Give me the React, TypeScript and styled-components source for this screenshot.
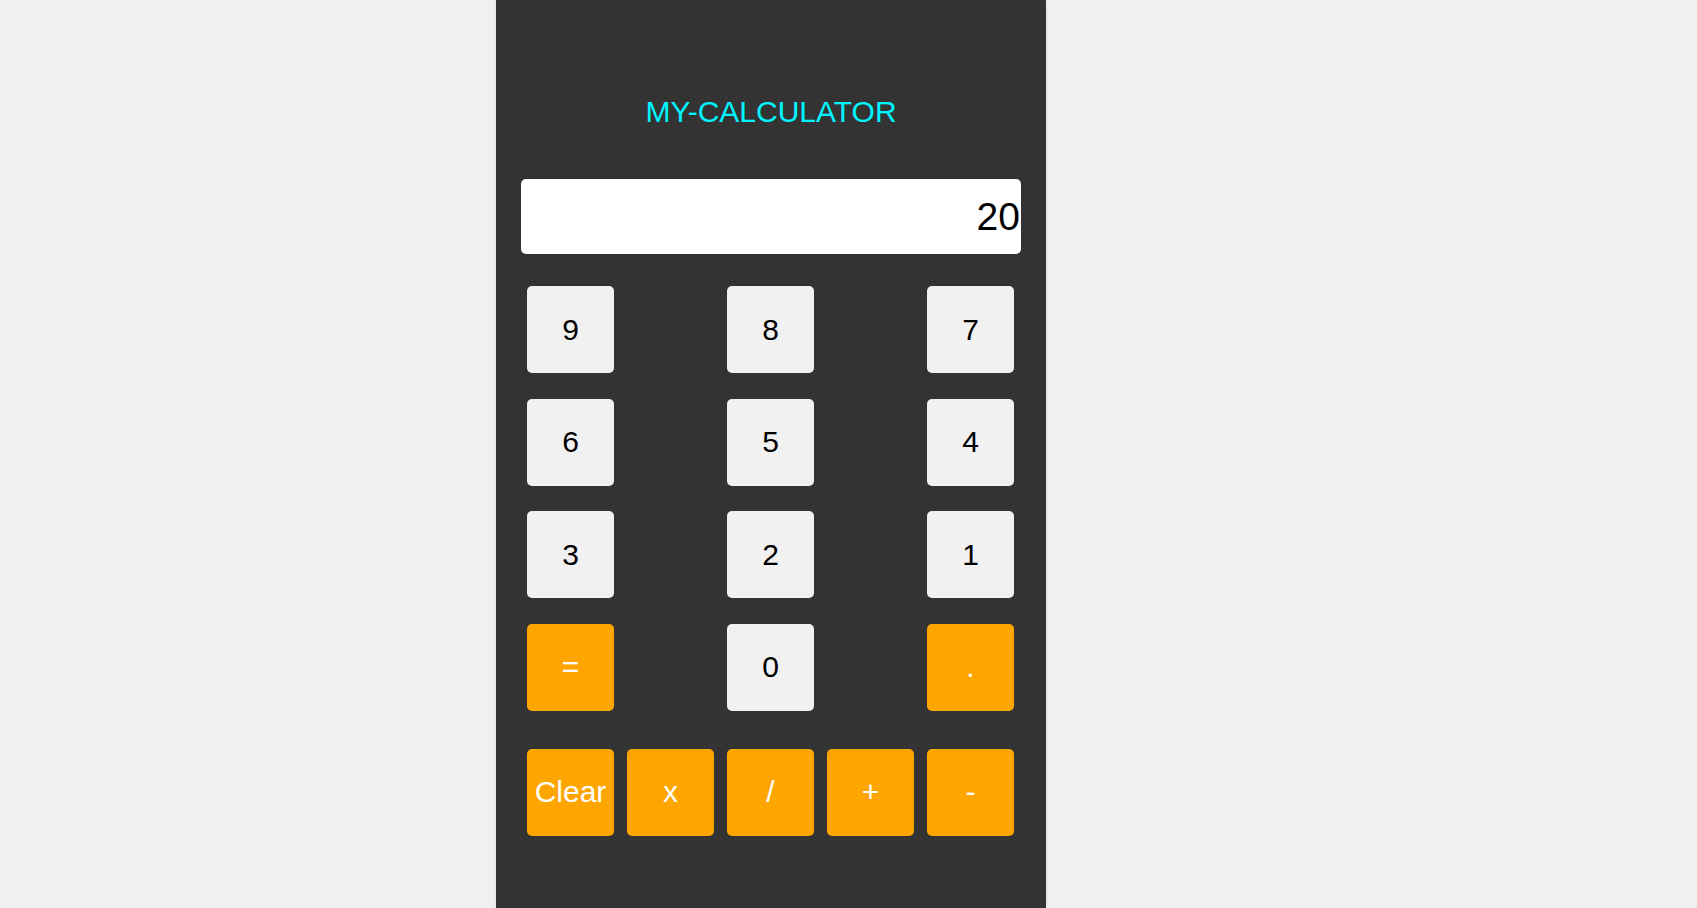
import React from "react";
import styled, { createGlobalStyle } from "styled-components";

const GlobalStyle = createGlobalStyle`
  html, body {
    margin: 0;
    padding: 0;
    background: #f0f0f0;
    font-family: "Liberation Sans", Arial, sans-serif;
  }
`;

const Panel = styled.main`
  box-sizing: border-box;
  margin-left: 496px;
  width: 550px;
  min-height: 908px;
  background: #333333;
  box-shadow: 0 0 5px rgba(0, 0, 0, 0.08);
  padding-top: 95px;
  display: flex;
  flex-direction: column;
`;

const Title = styled.h1`
  margin: 0;
  font-size: 30px;
  font-weight: 400;
  line-height: 34px;
  text-align: center;
  color: #00f5ff;
`;

const Display = styled.div`
  box-sizing: border-box;
  margin: 50px 25px 0 25px;
  height: 75px;
  background: #ffffff;
  border-radius: 5px;
  display: flex;
  align-items: center;
  justify-content: flex-end;
  padding-right: 1px;
  font-size: 39px;
  color: #000000;
`;

const Keypad = styled.div`
  margin-top: 32px;
  padding: 0 32px 0 31px;
  display: flex;
  flex-direction: column;
  gap: 25.5px;
`;

const DigitRow = styled.div`
  display: flex;
  justify-content: space-between;
`;

const OperatorRow = styled.div`
  display: flex;
  gap: 13px;
  margin-top: 12.5px;
`;

const Key = styled.button<{ $accent?: boolean }>`
  box-sizing: border-box;
  width: 87px;
  height: 87px;
  border: none;
  border-radius: 5px;
  padding: 0;
  font-family: "Liberation Sans", Arial, sans-serif;
  font-size: 30px;
  display: flex;
  align-items: center;
  justify-content: center;
  background: ${(p) => (p.$accent ? "#ffa500" : "#f1f1f1")};
  color: ${(p) => (p.$accent ? "#ffffff" : "#000000")};
  white-space: nowrap;
  cursor: pointer;
`;

const rows: { label: string; accent?: boolean }[][] = [
  [{ label: "9" }, { label: "8" }, { label: "7" }],
  [{ label: "6" }, { label: "5" }, { label: "4" }],
  [{ label: "3" }, { label: "2" }, { label: "1" }],
  [{ label: "=", accent: true }, { label: "0" }, { label: ".", accent: true }],
];

const operators = ["Clear", "x", "/", "+", "-"];

export default function App() {
  return (
    <>
      <GlobalStyle />
      <Panel>
        <Title>MY-CALCULATOR</Title>
        <Display>20</Display>
        <Keypad>
          {rows.map((row, i) => (
            <DigitRow key={i}>
              {row.map((k) => (
                <Key key={k.label} $accent={k.accent}>
                  {k.label}
                </Key>
              ))}
            </DigitRow>
          ))}
          <OperatorRow>
            {operators.map((op) => (
              <Key key={op} $accent>
                {op}
              </Key>
            ))}
          </OperatorRow>
        </Keypad>
      </Panel>
    </>
  );
}
